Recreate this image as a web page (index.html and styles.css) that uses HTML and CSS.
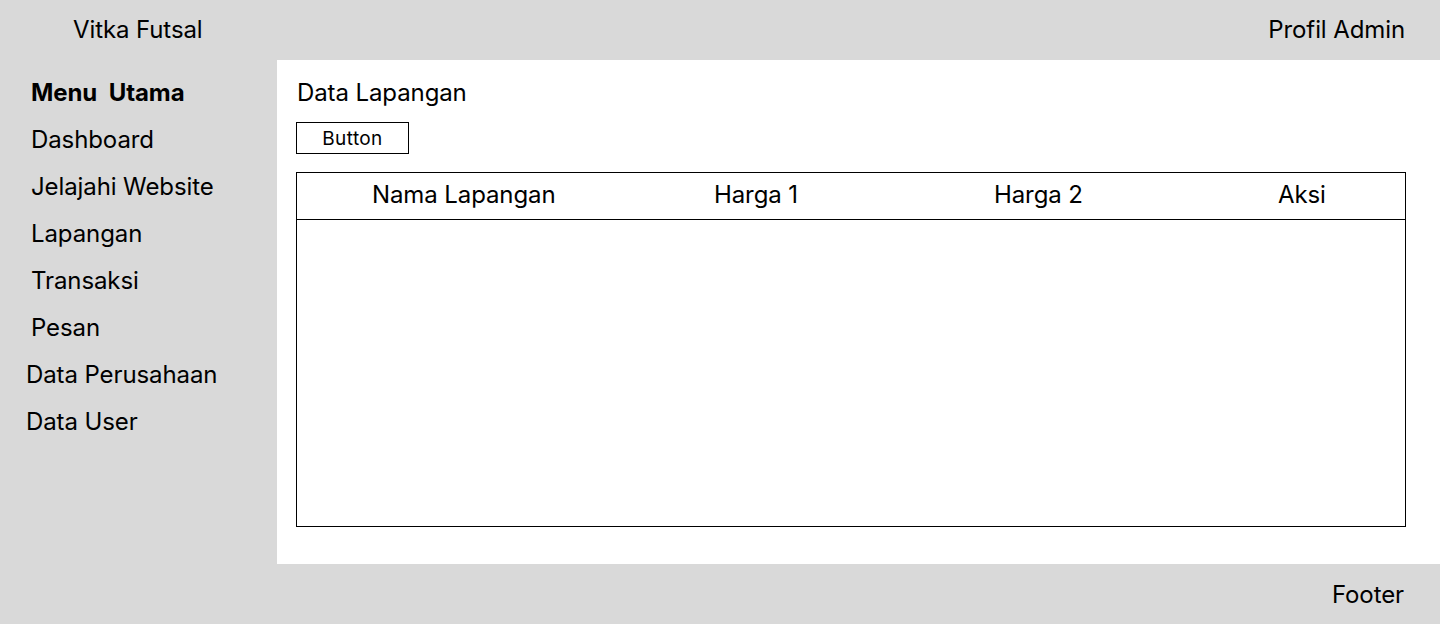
FILE: index.html
```html
<!DOCTYPE html>
<html lang="id">
<head>
<meta charset="utf-8">
<title>Vitka Futsal - Data Lapangan</title>
<link rel="stylesheet" href="styles.css">
</head>
<body>
<div class="page">
  <header class="topbar">
    <div class="brand">Vitka Futsal</div>
    <div class="profile">Profil Admin</div>
  </header>
  <div class="middle">
    <nav class="sidebar">
      <div class="nav-title">Menu Utama</div>
      <div class="nav-item">Dashboard</div>
      <div class="nav-item">Jelajahi Website</div>
      <div class="nav-item">Lapangan</div>
      <div class="nav-item">Transaksi</div>
      <div class="nav-item">Pesan</div>
      <div class="nav-item nav-item-shift">Data Perusahaan</div>
      <div class="nav-item nav-item-shift">Data User</div>
    </nav>
    <main class="content">
      <h1 class="page-title">Data Lapangan</h1>
      <button class="btn" type="button">Button</button>
      <div class="table">
        <div class="table-head">
          <div class="th th-nama">Nama Lapangan</div>
          <div class="th th-h1">Harga 1</div>
          <div class="th th-h2">Harga 2</div>
          <div class="th th-aksi">Aksi</div>
        </div>
        <div class="table-body"></div>
      </div>
    </main>
  </div>
  <footer class="footer">Footer</footer>
</div>
</body>
</html>
```
FILE: styles.css
```css
* { box-sizing: border-box; }
html, body { margin: 0; padding: 0; }
body {
  background: #d9d9d9;
  font-family: Inter, "Noto Sans", sans-serif;
  color: #000;
  letter-spacing: -0.1px;
}
.page {
  width: 1440px;
  height: 624px;
  display: flex;
  flex-direction: column;
}
.topbar {
  height: 60px;
  display: flex;
  align-items: center;
  justify-content: space-between;
  padding: 0 35px 2px 73px;
  font-size: 24px;
}
.middle {
  height: 504px;
  display: flex;
}
.sidebar {
  width: 277px;
  padding-top: 9px;
  display: flex;
  flex-direction: column;
}
.nav-title, .nav-item {
  height: 47px;
  line-height: 47px;
  font-size: 24px;
  padding-left: 31px;
}
.nav-title {
  font-weight: 700;
  word-spacing: 6px;
}
.nav-item-shift { padding-left: 26px; }
.content {
  flex: 1;
  background: #fff;
  padding: 17px 34px 0 19px;
  display: flex;
  flex-direction: column;
  align-items: flex-start;
}
.page-title {
  margin: 0;
  font-size: 24px;
  font-weight: 400;
  line-height: 32px;
  padding-left: 1px;
}
.btn {
  margin-top: 13px;
  width: 113px;
  height: 32px;
  border: 1px solid #000;
  background: #fff;
  font-family: inherit;
  font-size: 19px;
  letter-spacing: 0.4px;
  color: #000;
  padding: 0;
}
.table {
  margin-top: 18px;
  width: 1110px;
  height: 355px;
  border: 1px solid #000;
  display: flex;
  flex-direction: column;
}
.table-head {
  height: 47px;
  border-bottom: 1px solid #000;
  display: grid;
  grid-template-columns: 417px 280px 284px 1fr;
  align-items: center;
  padding-bottom: 3px;
  font-size: 24px;
}
.th-nama { padding-left: 75px; }
.table-body { flex: 1; }
.footer {
  height: 60px;
  display: flex;
  align-items: center;
  justify-content: flex-end;
  padding-right: 36px;
  font-size: 24px;
}
```
